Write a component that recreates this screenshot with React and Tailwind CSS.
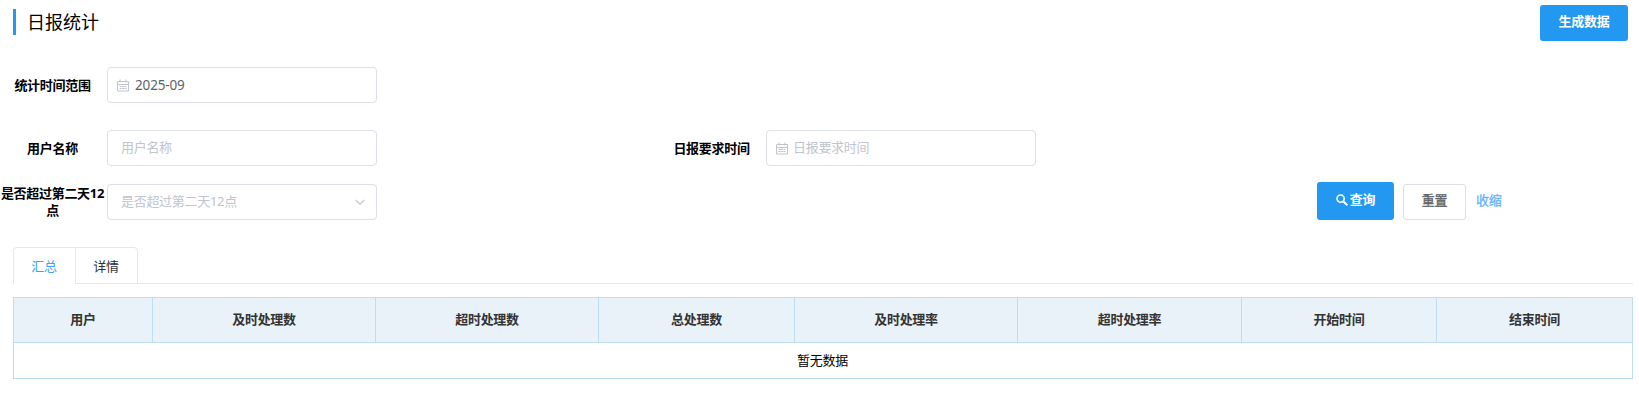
const columns = ['用户', '及时处理数', '超时处理数', '总处理数', '及时处理率', '超时处理率', '开始时间', '结束时间'];

function CalendarIcon() {
  return (
    <svg className="h-[13px] w-3 shrink-0" viewBox="0 0 12 13" fill="none" stroke="#c0c4cc">
      <path d="M.5 2.5h11v9.5H.5z M.5 5.5h11 M3 .5v3 M9 .5v3" />
      <path d="M2.5 7.5h7 M2.5 9.5h7" strokeDasharray="2 .5" />
    </svg>
  );
}

function SearchIcon() {
  return (
    <svg className="h-3 w-3 shrink-0" viewBox="0 0 12 12" fill="none" stroke="#fff" strokeWidth="1.6">
      <circle cx="4.6" cy="4.6" r="3.6" />
      <path d="M7.2 7.2 11.4 11.4" strokeWidth="2" />
    </svg>
  );
}

function Field({ label, children, className = '' }) {
  return (
    <div className={`flex items-center ${className}`}>
      <div className="w-[107px] shrink-0 whitespace-nowrap pr-[2px] text-center font-bold leading-[17px] tracking-[-0.3px] text-black">{label}</div>
      <div className="flex h-9 w-[270px] shrink-0 items-center rounded border border-[#dcdfe6]">{children}</div>
    </div>
  );
}

export default function App() {
  return (
    <div className="h-[401px] w-full overflow-hidden bg-white font-['Liberation_Sans','Noto_Sans_CJK_SC',sans-serif] text-[13px] tracking-[-0.3px] text-black">
      <header className="flex h-[67px] items-start justify-between pl-[13px] pr-[11px]">
        <h1 className="mt-[9px] flex h-[26px] items-center border-l-[3px] border-[#2298f0] pl-[11px] pt-px text-lg leading-none tracking-normal">日报统计</h1>
        <button className="mt-[5px] flex h-9 w-[88px] items-center justify-center rounded-[3px] bg-[#2298f0] pb-[3px] font-bold text-white">生成数据</button>
      </header>

      <Field label="统计时间范围">
        <span className="flex items-center gap-[6px] pl-[9px] font-['Noto_Sans','Noto_Sans_CJK_SC',sans-serif] text-[13.5px] tracking-[-0.15px] text-[#606266]"><CalendarIcon />2025-09</span>
      </Field>

      <div className="mt-[27px] flex">
        <Field label="用户名称" className="w-[659px]">
          <span className="pl-[13px] text-[#c0c4cc]">用户名称</span>
        </Field>
        <Field label="日报要求时间">
          <span className="flex items-center gap-[5px] pl-[9px] text-[#c0c4cc]"><CalendarIcon />日报要求时间</span>
        </Field>
      </div>

      <div className="mt-4 flex h-[38px] items-end">
        <Field label={<>是否超过第二天<span className="font-['Noto_Sans']">12</span><br />点</>} className="w-[1317px]">
          <div className="flex w-full items-center justify-between pl-[13px] pr-[10px] text-[#c0c4cc]">
            <span>是否超过第二天<span className="font-['Noto_Sans']">12</span>点</span>
            <svg className="h-3 w-3" viewBox="0 0 12 12" fill="none" stroke="#c0c4cc" strokeWidth="1.1">
              <path d="M1.5 3.8 6 8.2l4.5-4.4" />
            </svg>
          </div>
        </Field>
        <button className="flex h-[38px] w-[77px] items-center justify-center gap-[2px] rounded-[3px] bg-[#2298f0] pb-[2px] font-bold text-white"><SearchIcon />查询</button>
        <button className="ml-[9px] flex h-9 w-[63px] items-center justify-center rounded-[3px] border border-[#dcdfe6] pb-[2px] text-[#606266] [-webkit-text-stroke:0.3px_#606266]">重置</button>
        <button className="ml-[10px] flex h-9 items-center pb-[2px] text-[#66b1ff] [-webkit-text-stroke:0.3px_#66b1ff]">收缩</button>
      </div>

      <div className="mt-[27px] flex h-[37px] pl-[13px] pr-[6px]">
        <div className="flex w-[62px] items-center justify-center rounded-tl border-l border-t border-[#e4e7ed] pr-px pt-px text-[#409eff]">汇总</div>
        <div className="flex w-[63px] items-center justify-center rounded-tr border border-[#e4e7ed] pr-px pt-[2px] text-[#303133]">详情</div>
        <div className="flex-1 border-b border-[#e4e7ed]" />
      </div>

      <div className="ml-[13px] mr-[6px] mt-[13px] border-b border-l border-t border-[#bddcf6]">
        <div className="grid h-[45px] grid-cols-[139px_223px_223px_196px_223px_224px_195px_196px] border-b border-[#bddcf6] bg-[#e9f2f9]">
          {columns.map((name) => (
            <div key={name} className="flex items-center justify-center border-r border-[#bddcf6] font-bold text-[#333]">{name}</div>
          ))}
        </div>
        <div className="flex h-[35px] items-center justify-center border-r border-[#bddcf6] pr-px">暂无数据</div>
      </div>
    </div>
  );
}
